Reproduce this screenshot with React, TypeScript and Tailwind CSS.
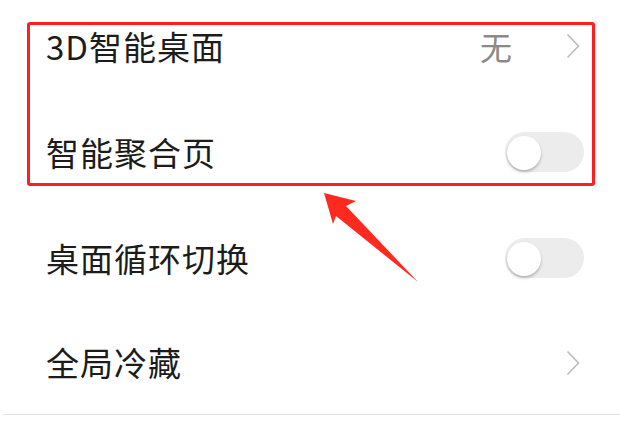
import React from "react";

const Chevron = () => (
  <svg width="14" height="26" viewBox="0 0 14 26" className="mr-[4px]">
    <polyline points="1.5,1.5 12.5,13 1.5,24.5" fill="none" stroke="#bcbcbc" strokeWidth="1.6" />
  </svg>
);

const Toggle = () => (
  <div className="w-[79px] h-[40px] rounded-full bg-[#ececec] flex items-center pl-[2px]">
    <div className="w-[34px] h-[34px] rounded-full bg-white shadow-[0_2px_3px_rgba(0,0,0,0.25)] mt-[2px]" />
  </div>
);

const Row = ({ label, right, h = "h-[106px]" }: { label: string; right: React.ReactNode; h?: string }) => (
  <div className={`${h} flex items-center justify-between pl-[46px] pr-[36px]`}>
    <span className="text-[33px] leading-none tracking-[1px] text-[#1c1c1c]">{label}</span>
    {right}
  </div>
);

export default function App() {
  return (
    <div
      className="relative w-[620px] h-[425px] overflow-hidden bg-white"
      style={{ fontFamily: '"Noto Sans CJK SC", "Noto Sans", sans-serif' }}
    >
      <div className="flex flex-col mt-[-7px]">
        <Row
          label="3D智能桌面"
          right={
            <div className="flex items-center">
              <span className="text-[32px] leading-none text-[#8a8a8a] mr-[54px]">无</span>
              <Chevron />
            </div>
          }
        />
        <Row label="智能聚合页" right={<Toggle />} />
        <Row label="桌面循环切换" right={<Toggle />} />
        <Row label="全局冷藏" right={<Chevron />} h="h-[103px]" />
        <div className="ml-[3px] h-px bg-[#e2e2e2]" />
      </div>

      <div className="absolute left-[27px] top-[22px] w-[568px] h-[164px] border-[3px] border-[#ff1f1f] rounded-[3px]" />

      <svg className="absolute left-0 top-0" width="620" height="425" viewBox="0 0 620 425">
        <polygon
          points="324,193 356,201 346,206 418,282 336,216 333,224"
          fill="#ff2a1f"
        />
      </svg>
    </div>
  );
}
